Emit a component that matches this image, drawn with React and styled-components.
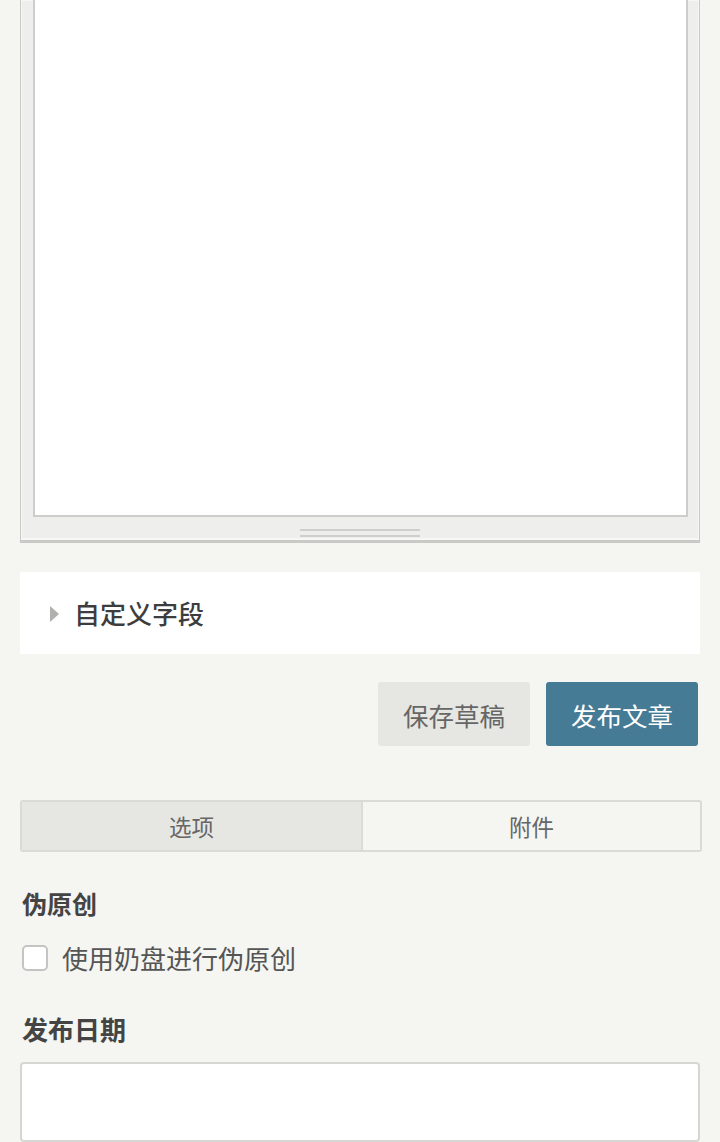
import React from "react";
import styled, { createGlobalStyle } from "styled-components";

const Global = createGlobalStyle`
  html, body { margin: 0; padding: 0; background: #f5f5f1; }
  body { font-family: "Noto Sans CJK SC", "Noto Sans", sans-serif; color: #444; }
  * { box-sizing: border-box; }
`;

const Page = styled.div`
  padding: 0 20px 0 20px;
  height: 1142px;
  overflow: hidden;
`;

const EditorFrame = styled.div`
  background: #eeeeec;
  border: 1px solid #c9c9c6;
  border-top: none;
  box-shadow: inset 0 0 0 1px #f6f6f4;
  padding: 0 11px 0 12px;
`;

const TextArea = styled.div`
  height: 517px;
  background: #fff;
  border: 2px solid #cdcdcb;
  border-top: none;
`;

const ResizeBar = styled.div`
  height: 25px;
  display: flex;
  justify-content: center;
  align-items: flex-start;
  padding-top: 12px;
  margin: 0 -11px 0 -12px;
  border-bottom: 2px solid #c9c9c6;
  box-shadow: inset 0 -3px 0 -1px #f7f7f5;
`;

const Grip = styled.div`
  width: 120px;
  height: 8px;
  border-top: 2px solid #cfcfcc;
  border-bottom: 2px solid #cfcfcc;
`;

const CustomFields = styled.div`
  margin-top: 29px;
  height: 82px;
  background: #fff;
  display: flex;
  align-items: center;
  padding-left: 30px;
  gap: 15px;
`;

const Caret = styled.span`
  width: 0;
  height: 0;
  margin-top: 2px;
  border-top: 8px solid transparent;
  border-bottom: 8px solid transparent;
  border-left: 9px solid #b0b0ae;
`;

const FieldsTitle = styled.span`
  font-size: 26px;
  font-weight: 500;
  color: #3d3d3d;
  line-height: 40px;
`;

const ButtonRow = styled.div`
  margin-top: 28px;
  display: flex;
  justify-content: flex-end;
  gap: 16px;
  padding-right: 2px;
`;

const Button = styled.button`
  width: 152px;
  height: 64px;
  border: none;
  border-radius: 3px;
  font-family: inherit;
  font-size: 25.5px;
  background: ${(p) => (p.$primary ? "#467b96" : "#e6e6e2")};
  color: ${(p) => (p.$primary ? "#fff" : "#666")};
  padding: 0;
`;

const Tabs = styled.div`
  margin-top: 54px;
  margin-right: -2px;
  display: grid;
  grid-template-columns: 339px 1fr;
  height: 52px;
  border: 2px solid #dadad6;
  border-radius: 3px;
  overflow: hidden;
`;

const Tab = styled.div`
  display: flex;
  align-items: center;
  justify-content: center;
  font-size: 22.5px;
  color: #666;
  background: ${(p) => (p.$active ? "#e6e6e2" : "#f5f5f1")};
  border-left: ${(p) => (p.$first ? "none" : "2px solid #dadad6")};
`;

const SectionLabel = styled.div`
  margin-top: ${(p) => p.$mt}px;
  font-size: ${(p) => p.$size}px;
  font-weight: 700;
  line-height: 40px;
  color: #444;
  padding-left: 2px;
`;

const CheckRow = styled.label`
  margin-top: 15px;
  display: flex;
  align-items: center;
  gap: 14px;
  height: 40px;
  padding-left: 2px;
`;

const CheckBox = styled.span`
  width: 26px;
  height: 26px;
  border: 2px solid #c4c4c2;
  border-radius: 5px;
  background: #fff;
`;

const CheckText = styled.span`
  font-size: 26px;
  color: #555;
  line-height: 40px;
`;

const DateInput = styled.div`
  margin-top: 13px;
  height: 80px;
  background: #fff;
  border: 2px solid #d6d6d3;
  border-radius: 4px;
`;

export default function App() {
  return (
    <>
      <Global />
      <Page>
        <EditorFrame>
          <TextArea />
          <ResizeBar>
            <Grip />
          </ResizeBar>
        </EditorFrame>
        <CustomFields>
          <Caret />
          <FieldsTitle>自定义字段</FieldsTitle>
        </CustomFields>
        <ButtonRow>
          <Button>保存草稿</Button>
          <Button $primary>发布文章</Button>
        </ButtonRow>
        <Tabs>
          <Tab $active $first>选项</Tab>
          <Tab>附件</Tab>
        </Tabs>
        <SectionLabel $mt={31} $size={25}>伪原创</SectionLabel>
        <CheckRow>
          <CheckBox />
          <CheckText>使用奶盘进行伪原创</CheckText>
        </CheckRow>
        <SectionLabel $mt={31} $size={26}>发布日期</SectionLabel>
        <DateInput />
      </Page>
    </>
  );
}
